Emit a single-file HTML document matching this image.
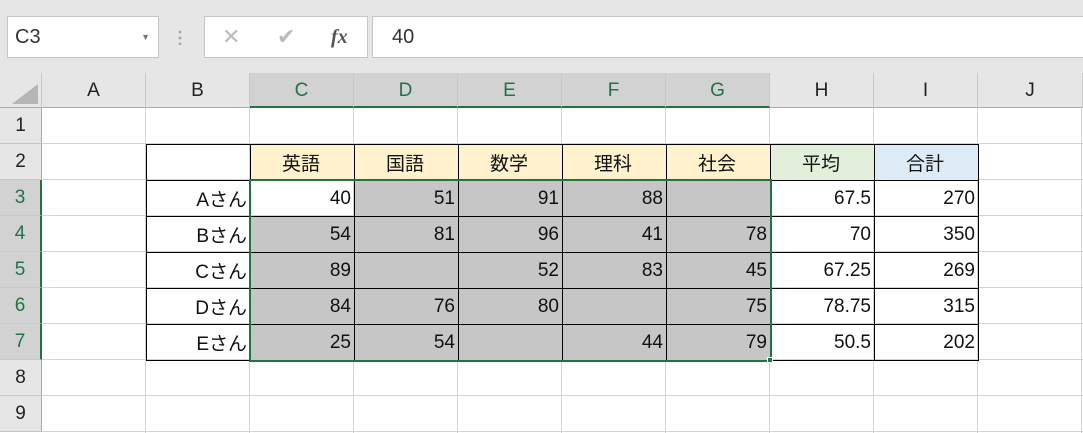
<!DOCTYPE html>
<html><head><meta charset="utf-8"><style>
*{margin:0;padding:0;box-sizing:border-box}
body{width:1083px;height:433px;overflow:hidden;background:#fff;font-family:"Liberation Sans","Noto Sans CJK JP",sans-serif;position:relative}
.top{position:absolute;left:0;top:0;width:1083px;height:73px;background:#e6e6e6}
.box{position:absolute;background:#fff;border:1px solid #c6c6c6}
.grid{position:absolute;left:42px;top:108px;width:1041px;height:325px;
background-image:linear-gradient(to right,#d4d4d4 1px,transparent 1px),linear-gradient(to bottom,#d4d4d4 1px,transparent 1px);
background-size:104px 36px;background-position:103px 35px}
.ch{position:absolute;top:73px;height:35px;border-right:1px solid #c8c8c8;border-bottom:1px solid #ababab;background:#e6e6e6;text-align:center;line-height:35px;font-size:19px;color:#222}
.rh{position:absolute;left:0;width:42px;height:36px;border-right:1px solid #ababab;border-bottom:1px solid #c8c8c8;background:#e6e6e6;text-align:center;line-height:36px;font-size:19px;color:#222}
.sel{background:#d2d2d2;color:#217346}
.ch.sel{border-bottom:2px solid #217346}
.rh.sel{border-right:2px solid #217346}
table{position:absolute;left:146px;top:144px;border-collapse:collapse;table-layout:fixed}
td{width:104px;height:36px;border:1px solid #000;font-size:19px;text-align:right;padding-right:3px;color:#111}
td.h{text-align:center;background:#fff2cc}
td.g{background:#c6c6c6}
</style></head><body>
<div class="top"></div>
<div class="box" style="left:7px;top:16px;width:152px;height:42px;font-size:20px;line-height:40px;padding-left:7px;color:#333">C3<span style="position:absolute;right:8px;top:0;font-size:9px;color:#777">▼</span></div>
<div style="position:absolute;left:178px;top:29px;width:4px;height:16px;background:radial-gradient(circle,#aaa 1.3px,transparent 1.6px);background-size:4px 6px"></div>
<div class="box" style="left:204px;top:16px;width:164px;height:42px;color:#bbb;font-size:22px;line-height:40px">
<span style="position:absolute;left:17px">✕</span><span style="position:absolute;left:72px;color:#bbb">✔</span><span style="position:absolute;left:126px;color:#555;font-family:'Liberation Serif',serif;font-style:italic;font-weight:bold;font-size:20px">fx</span></div>
<div class="box" style="left:372px;top:16px;width:720px;height:42px;font-size:20px;line-height:40px;padding-left:19px;color:#333">40</div>
<div class="grid"></div>
<div class="ch" style="left:0;width:42px"><svg width="42" height="35" style="position:absolute;left:0;top:0"><polygon points="38,11 38,31 12,31" fill="#b5b5b5"/></svg></div>
<div class="ch" style="left:42px;width:104px">A</div>
<div class="ch" style="left:146px;width:104px">B</div>
<div class="ch sel" style="left:250px;width:104px">C</div>
<div class="ch sel" style="left:354px;width:104px">D</div>
<div class="ch sel" style="left:458px;width:104px">E</div>
<div class="ch sel" style="left:562px;width:104px">F</div>
<div class="ch sel" style="left:666px;width:104px">G</div>
<div class="ch" style="left:770px;width:104px">H</div>
<div class="ch" style="left:874px;width:104px">I</div>
<div class="ch" style="left:978px;width:105px">J</div>
<div class="rh" style="top:108px">1</div>
<div class="rh" style="top:144px">2</div>
<div class="rh sel" style="top:180px">3</div>
<div class="rh sel" style="top:216px">4</div>
<div class="rh sel" style="top:252px">5</div>
<div class="rh sel" style="top:288px">6</div>
<div class="rh sel" style="top:324px">7</div>
<div class="rh" style="top:360px">8</div>
<div class="rh" style="top:396px">9</div>
<table>
<tr><td></td><td class="h">英語</td><td class="h">国語</td><td class="h">数学</td><td class="h">理科</td><td class="h">社会</td><td class="h" style="background:#e2efda">平均</td><td class="h" style="background:#ddebf7">合計</td></tr>
<tr><td>Aさん</td><td>40</td><td class="g">51</td><td class="g">91</td><td class="g">88</td><td class="g"></td><td>67.5</td><td>270</td></tr>
<tr><td>Bさん</td><td class="g">54</td><td class="g">81</td><td class="g">96</td><td class="g">41</td><td class="g">78</td><td>70</td><td>350</td></tr>
<tr><td>Cさん</td><td class="g">89</td><td class="g"></td><td class="g">52</td><td class="g">83</td><td class="g">45</td><td>67.25</td><td>269</td></tr>
<tr><td>Dさん</td><td class="g">84</td><td class="g">76</td><td class="g">80</td><td class="g"></td><td class="g">75</td><td>78.75</td><td>315</td></tr>
<tr><td>Eさん</td><td class="g">25</td><td class="g">54</td><td class="g"></td><td class="g">44</td><td class="g">79</td><td>50.5</td><td>202</td></tr>
</table>
<div style="position:absolute;left:249px;top:179px;width:523px;height:183px;border:2px solid #217346"></div>
<div style="position:absolute;left:767px;top:357px;width:6px;height:6px;background:#217346;border:1px solid #fff"></div>
</body></html>
